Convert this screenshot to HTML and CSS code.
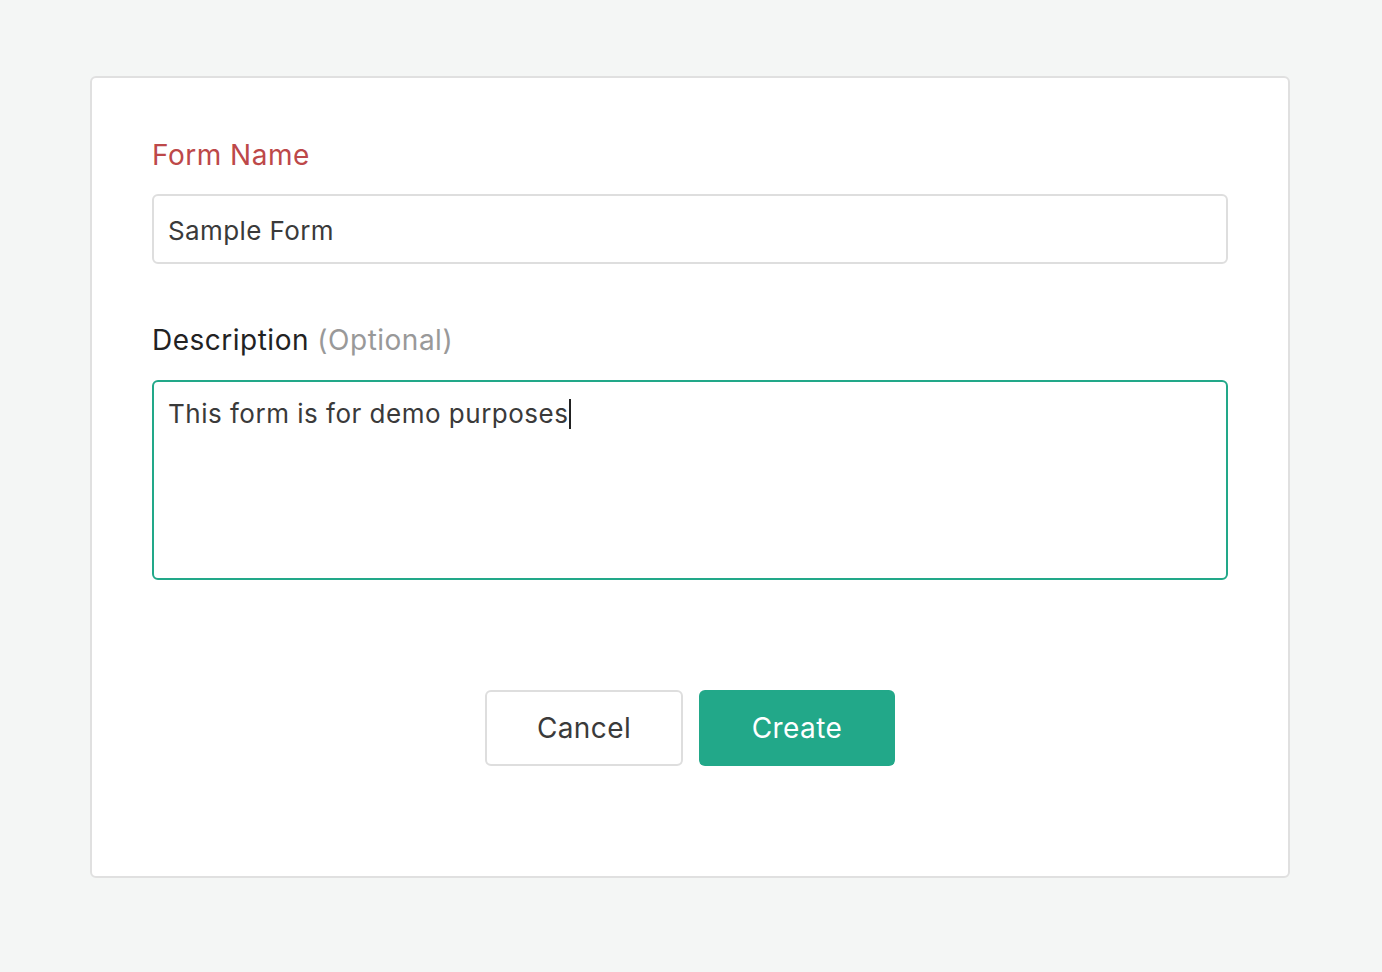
FILE: index.html
```html
<!DOCTYPE html>
<html>
<head>
<meta charset="utf-8">
<link rel="stylesheet" href="styles.css">
</head>
<body>
<div class="card">
  <div class="label label-error">Form Name</div>
  <div class="input">Sample Form</div>
  <div class="label label-desc">Description <span class="optional">(Optional)</span></div>
  <div class="textarea">This form is for demo purposes<span class="caret"></span></div>
  <div class="actions">
    <button class="btn btn-cancel">Cancel</button>
    <button class="btn btn-create">Create</button>
  </div>
</div>
</body>
</html>
```
FILE: styles.css
```css
html, body {
  margin: 0;
  padding: 0;
  background: #f4f6f5;
  font-family: Inter, "Noto Sans", sans-serif;
}
.card {
  box-sizing: border-box;
  width: 1200px;
  margin: 76px 0 0 90px;
  background: #fff;
  border: 2px solid #e0e0e0;
  border-radius: 6px;
  padding: 60px 60px 110px 60px;
}
.label {
  font-size: 28px;
  line-height: 34px;
  color: #222;
  letter-spacing: 0.5px;
}
.label-error {
  color: #bd4849;
  margin-bottom: 22px;
}
.label-desc {
  margin-top: 59px;
  margin-bottom: 23px;
}
.optional {
  color: #999;
}
.input {
  box-sizing: border-box;
  height: 70px;
  border: 2px solid #dedede;
  border-radius: 6px;
  padding: 3px 14px 0 14px;
  font-size: 26px;
  letter-spacing: 0.4px;
  color: #3a3a3a;
  display: flex;
  align-items: center;
}
.textarea {
  box-sizing: border-box;
  height: 200px;
  border: 2px solid #22a889;
  border-radius: 6px;
  padding: 14px 14px;
  font-size: 26px;
  line-height: 36px;
  letter-spacing: 0.5px;
  color: #3a3a3a;
}
.caret {
  display: inline-block;
  width: 2px;
  height: 30px;
  background: #222;
  vertical-align: -6px;
  margin-left: 1px;
}
.actions {
  display: flex;
  justify-content: center;
  gap: 16px;
  margin-top: 110px;
}
.btn {
  box-sizing: border-box;
  height: 76px;
  font-family: Inter, "Noto Sans", sans-serif;
  font-size: 28px;
  letter-spacing: 0.4px;
  border-radius: 6px;
  padding: 0;
}
.btn-cancel {
  width: 198px;
  background: #fff;
  border: 2px solid #dedede;
  color: #3a3a3a;
}
.btn-create {
  width: 196px;
  background: #22a889;
  border: none;
  color: #fff;
}
```
